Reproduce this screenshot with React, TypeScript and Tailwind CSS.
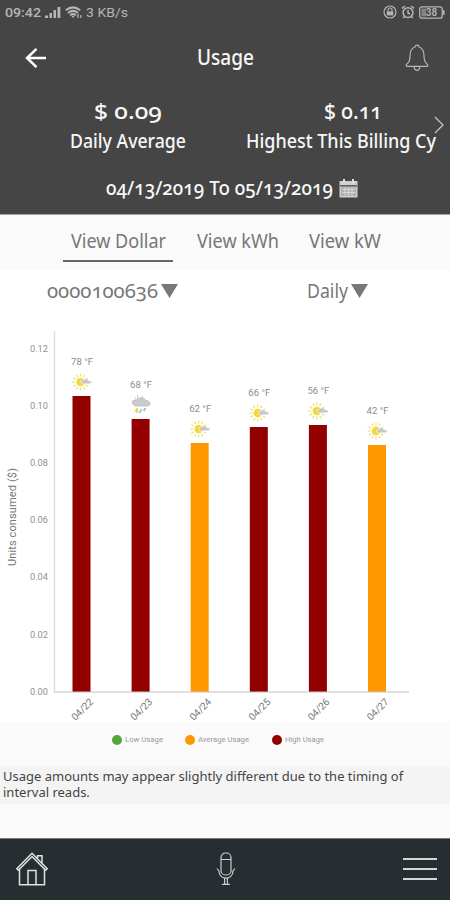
import type { ReactNode } from "react";

const bars = [
  { date: "04/22", temp: "78 °F", top: 86, level: "high", rain: false },
  { date: "04/23", temp: "68 °F", top: 109, level: "high", rain: true },
  { date: "04/24", temp: "62 °F", top: 133, level: "average", rain: false },
  { date: "04/25", temp: "66 °F", top: 117, level: "high", rain: false },
  { date: "04/26", temp: "56 °F", top: 115, level: "high", rain: false },
  { date: "04/27", temp: "42 °F", top: 135, level: "average", rain: false }
];

const ticks = ["0.12", "0.10", "0.08", "0.06", "0.04", "0.02", "0.00"];

const tabs = [
  { label: "View Dollar", box: "w-[110px] ml-[63px]", width: 95, active: true },
  { label: "View kWh", box: "w-[83px] ml-[23px]", width: 82, active: false },
  { label: "View kW", box: "w-[74px] ml-[29px]", width: 72, active: false }
];

const legend = [
  { label: "Low Usage", color: "bg-[#55a53c]", box: "w-[73px]", length: 38 },
  { label: "Average Usage", color: "bg-[#ff9800]", box: "w-[87px]", length: 51 },
  { label: "High Usage", color: "bg-[#920000]", box: "w-[60px]", length: 39 }
];

// Text held to a fixed width, so labels keep their narrow proportions
function FitText({ children, width, size, weight = 400, className = "" }: {
  children: string;
  width: number;
  size: number;
  weight?: number;
  className?: string;
}) {
  return (
    <svg width={width} height={size * 1.4} className={`block shrink-0 overflow-visible ${className}`} fill="currentColor">
      <text x="0" y={size * 1.07} fontSize={size} fontWeight={weight} textLength={width} lengthAdjust="spacingAndGlyphs">
        {children}
      </text>
    </svg>
  );
}

function StatusBar() {
  return (
    <div className="flex h-6 items-center pl-[5px] pr-[5px] font-[Roboto] text-[#b5b5b5]">
      <FitText width={36} size={13.5} weight={500}>09:42</FitText>
      <svg width="17" height="13" viewBox="0 0 17 13" className="ml-1 block" fill="currentColor">
        <rect x="0" y="9.5" width="3" height="2.5" />
        <rect x="4.5" y="7" width="2.5" height="5" />
        <rect x="8.5" y="4" width="2.5" height="8" />
        <rect x="12.5" y="1" width="2.8" height="11" />
      </svg>
      <svg width="18" height="13" viewBox="0 0 18 13" className="ml-[3px] block" fill="none" stroke="currentColor" strokeWidth="2">
        <path d="M0.8 4.2 Q8 -1.4 15.2 4.2 M3 6.9 Q8 2.8 13 6.9 M5.2 9.2 Q8 7 10.8 9.2" />
        <path d="M6.4 10 L8 12 L9.6 10Z" fill="currentColor" stroke="none" />
        <path d="M13 8 V12 M15.8 9 V12" strokeWidth="1.2" />
      </svg>
      <FitText width={42} size={13.5} className="ml-[3px]">3 KB/s</FitText>
      <svg width="14" height="14" viewBox="0 0 14 14" className="ml-auto block" fill="none" stroke="currentColor" strokeWidth="1.2">
        <circle cx="7" cy="7" r="6" />
        <rect x="3.8" y="6.4" width="6.4" height="4" fill="currentColor" stroke="none" />
        <path d="M5 6.5 V5 a2 2 0 0 1 4 0 V6.5" />
      </svg>
      <svg width="14" height="14" viewBox="0 0 14 14" className="ml-1 block" fill="none" stroke="currentColor" strokeWidth="1.5">
        <circle cx="7" cy="7.6" r="4.9" />
        <path d="M1 3.4 L3.8 1 M13 3.4 L10.2 1 M7 5 V8 L9 9 M3.4 11.5 L2.2 13 M10.6 11.5 L11.8 13" />
      </svg>
      <svg width="26" height="13" viewBox="0 0 26 13" className="ml-1 block" fill="none" stroke="currentColor">
        <rect x="0.7" y="0.8" width="22.5" height="11.4" rx="2.2" strokeWidth="1.3" />
        <rect x="2.5" y="2.6" width="4.5" height="7.8" fill="#858585" stroke="none" />
        <path d="M24.8 4.3 V8.7" strokeWidth="1.6" />
        <text x="12.5" y="10" fontSize="10" fontWeight="600" textAnchor="middle" fill="currentColor" stroke="none">38</text>
      </svg>
    </div>
  );
}

function Summary({ amount, label, amountWidth, labelWidth, amountClass = "" }: {
  amount: string;
  label: string;
  amountWidth: number;
  labelWidth: number;
  amountClass?: string;
}) {
  return (
    <div className="flex flex-col items-center">
      <FitText width={amountWidth} size={21} weight={500} className={amountClass}>{amount}</FitText>
      <FitText width={labelWidth} size={20} weight={500} className="mt-px">{label}</FitText>
    </div>
  );
}

function Header() {
  return (
    <header className="h-[214px] bg-[#454545] text-[#f7f7f7]">
      <StatusBar />
      <div className="flex h-[67px] items-center pl-[25px] pr-[21px]">
        <svg width="22" height="20" viewBox="0 0 22 20" className="block" fill="none" stroke="white" strokeWidth="2.5">
          <path d="M21 10 H2 M11.5 0.9 L2 10 L11.5 19.1" />
        </svg>
        <FitText width={57} size={21.5} weight={500} className="-mt-px ml-[150px]">Usage</FitText>
        <svg width="24" height="28" viewBox="0 0 24 28" className="ml-auto mt-px block" fill="none" stroke="#b7b7b7" strokeWidth="1.2">
          <path d="M10 3 C10 0.5 14 0.5 14 3 C18 4.2 19 7.5 19 12 C19 17 20 18.7 22.5 20.6 C23.3 21.6 22.8 22.4 21.5 22.4 H2.5 C1.2 22.4 0.7 21.6 1.5 20.6 C4 18.7 5 17 5 12 C5 7.5 6 4.2 10 3Z" />
          <path d="M9.2 22.5 C9 27.6 15 27.6 14.8 22.5" />
        </svg>
      </div>
      <div className="flex h-[66px] items-start pt-[6px] oldstyle-nums">
        <div className="ml-[70px]">
          <Summary amount="$ 0.09" label="Daily Average" amountWidth={68} labelWidth={116} />
        </div>
        <div className="ml-[60px]">
          <Summary amount="$ 0.11" label="Highest This Billing Cy" amountWidth={58} labelWidth={190} amountClass="ml-6" />
        </div>
        <svg width="10" height="18" viewBox="0 0 10 18" className="-ml-0.5 mt-[19px] block shrink-0" fill="none" stroke="#c9c9c9" strokeWidth="1.2">
          <path d="M1 1 L9 9 L1 17" />
        </svg>
      </div>
      <div className="flex items-center pl-[106px] pt-[18px] oldstyle-nums">
        <FitText width={227} size={19} weight={500}>04/13/2019 To 05/13/2019</FitText>
        <svg width="19" height="19" viewBox="0 0 19 19" className="ml-[6px] block">
          <rect x="0.5" y="2" width="18" height="16.5" fill="#d0d0d0" />
          <rect x="2" y="7.5" width="15" height="9.5" fill="#b0b0b0" />
          <path d="M1 6.8 H18" stroke="#4a4a4a" strokeWidth="1.3" />
          <path d="M5 0 V4.5 M14 0 V4.5" stroke="#ddd" strokeWidth="2" />
          <path d="M3 10.3 H16 M3 13.5 H16 M6 8 V17 M9.5 8 V17 M13 8 V17" stroke="#ddd" strokeWidth="0.9" />
        </svg>
      </div>
    </header>
  );
}

function Tabs() {
  return (
    <nav className="flex h-14 border-t border-[#a3a3a3] bg-[#fafafa] text-[#777]">
      {tabs.map((tab) => (
        <button key={tab.label} type="button" className={`flex h-[47px] justify-center border-b-2 pt-[13px] ${tab.active ? "border-[#666]" : "border-transparent"} ${tab.box}`}>
          <FitText width={tab.width} size={19}>{tab.label}</FitText>
        </button>
      ))}
    </nav>
  );
}

function Triangle() {
  return (
    <svg width="17" height="14" viewBox="0 0 17 14" className="block" fill="#777">
      <path d="M0 0 H17 L8.5 14Z" />
    </svg>
  );
}

function Filters() {
  return (
    <div className="flex h-10 items-center bg-white pt-px text-[#777] oldstyle-nums">
      <button type="button" className="ml-[47px] flex items-center gap-[3px]">
        <FitText width={111} size={20}>0000100636</FitText>
        <Triangle />
      </button>
      <button type="button" className="ml-[129px] flex items-center gap-[3px]">
        <FitText width={41} size={19} className="mt-px">Daily</FitText>
        <Triangle />
      </button>
    </div>
  );
}

function SunCloud({ x, y }: { x: number; y: number }) {
  return (
    <g transform={`translate(${x} ${y})`}>
      {Array.from({ length: 12 }, (_, i) => (
        <path key={i} d="M0 -5.5 V-8.5" stroke="#f0e065" strokeWidth="1.1" transform={`rotate(${i * 30})`} />
      ))}
      <circle r="4.2" fill="#f1d936" />
      <path d="M2.5 2 C-0.5 1.6 0 -2.2 2.8 -1.8 C4 -4 7.5 -3.3 8 -1.4 C12 -1.4 12 1.8 9.4 1.8Z" fill="#c6c6cc" stroke="#fff" strokeWidth="0.6" />
    </g>
  );
}

function Storm({ x, y }: { x: number; y: number }) {
  return (
    <g transform={`translate(${x} ${y})`}>
      <path d="M-6 -7 L-4 -4 M-3 -9 V-5 M2 -8 L1 -5 M-9 -3 H-5" stroke="#ccc" />
      <path d="M-7 1 C-10 -2 -6 -5 -4 -3.5 C-2 -7.5 4 -7 5 -3.5 C10 -4 11 2 7 2 H-5Z" fill="#cbcbcb" stroke="#b3b3b3" strokeWidth="0.7" />
      <path d="M-3 4 L-5 7 H-3 L-4 9" stroke="#ead33b" strokeWidth="1.5" fill="none" />
      <path d="M1 5 L-1 9 M5 4 L3 7" stroke="#72b9e8" strokeWidth="1.4" />
    </g>
  );
}

function UsageChart() {
  return (
    <svg width="450" height="412" viewBox="0 0 450 412" className="block bg-white font-[Roboto]">
      <path d="M54.5 21 V382" stroke="#dcdcdc" strokeWidth="1.3" />
      {ticks.map((tick, i) => (
        <text key={tick} x="30" y={42 + i * 57.1} fontSize="9.5" textLength="18" lengthAdjust="spacingAndGlyphs" fill="#909090">{tick}</text>
      ))}
      <text transform="translate(15.5 257) rotate(-90)" x="1" fontSize="11" textLength="98" fill="#777">Units consumed ($)</text>
      {bars.map((bar, i) => {
        const x = 81.5 + i * 59.1;
        return (
          <g key={bar.date}>
            <text x={x - 10.5} y={bar.top - 31} fontSize="9" textLength="22" lengthAdjust="spacingAndGlyphs" fill="#8c8c8c">{bar.temp}</text>
            {bar.rain ? <Storm x={x} y={bar.top - 15} /> : <SunCloud x={x - 1} y={bar.top - 14} />}
            <rect x={x - 9} y={bar.top} width="18" height={382 - bar.top} fill={bar.level === "high" ? "#930000" : "#ff9800"} />
            <text transform={`translate(${x - 6} 411) rotate(-45)`} fontSize="10" textLength="26" fill="#777">{bar.date}</text>
          </g>
        );
      })}
      <path d="M54 382 H409" stroke="#c4c4c4" strokeWidth="1.2" />
    </svg>
  );
}

function Legend() {
  return (
    <div className="flex h-11 items-start bg-[#fafafa] pl-28 pt-[13px] font-[Roboto] text-[#999]">
      {legend.map((item) => (
        <div key={item.label} className={`flex items-center ${item.box}`}>
          <span className={`mr-[3px] size-2.5 shrink-0 rounded-full ${item.color}`} />
          <FitText width={item.length} size={7}>{item.label}</FitText>
        </div>
      ))}
    </div>
  );
}

function NavButton({ label, className = "", children }: { label: string; className?: string; children: ReactNode }) {
  return (
    <button type="button" aria-label={label} className={className}>
      {children}
    </button>
  );
}

function BottomNav() {
  return (
    <nav className="flex h-[62px] items-center border-t border-[#747a7b] bg-[#262e31] pb-0.5 pl-4 pr-[13px]">
      <NavButton label="Home">
        <svg width="32" height="34" viewBox="0 0 32 34" className="block" fill="none" stroke="#e0e3e4" strokeWidth="1.5">
          <path d="M0.8 16.7 L16 1.2 L31.2 16.7 L29.6 18.3 L16 4.5 L2.4 18.3Z" />
          <path d="M3.5 16.5 V32.7 H28.5 V16.5 M12 32 V18.5 H20 V32 M21.5 6.6 V3.8 H26 V11" />
        </svg>
      </NavButton>
      <NavButton label="Voice" className="ml-[168px]">
        <svg width="20" height="34" viewBox="0 0 20 34" className="block" fill="none" stroke="#c9cdce" strokeWidth="1.2">
          <rect x="5" y="1" width="10" height="22" rx="4.5" />
          <path d="M5 7.5 H15 M1 16.5 L3 19 C3 28.5 17 28.5 17 19 L19 16.5 M8.6 26.5 V32 M11.4 26.5 V32 M6 32.4 H14" />
        </svg>
      </NavButton>
      <NavButton label="Menu" className="ml-auto">
        <span className="flex w-[34px] flex-col gap-2">
          <span className="h-0.5 bg-[#d5d8d9]" />
          <span className="h-0.5 bg-[#d5d8d9]" />
          <span className="h-0.5 bg-[#d5d8d9]" />
        </span>
      </NavButton>
    </nav>
  );
}

export default function App() {
  return (
    <div className="h-[900px] w-[450px] bg-[#fafafa] font-['Noto_Sans',sans-serif]">
      <Header />
      <Tabs />
      <Filters />
      <UsageChart />
      <Legend />
      <p className="h-[38px] whitespace-nowrap bg-[#f4f4f4] pl-[3px] pt-[2px] text-[13px] leading-4 text-[#444]">
        Usage amounts may appear slightly different due to the timing of
        <br />
        interval reads.
      </p>
      <div className="h-[34px]" />
      <BottomNav />
    </div>
  );
}
